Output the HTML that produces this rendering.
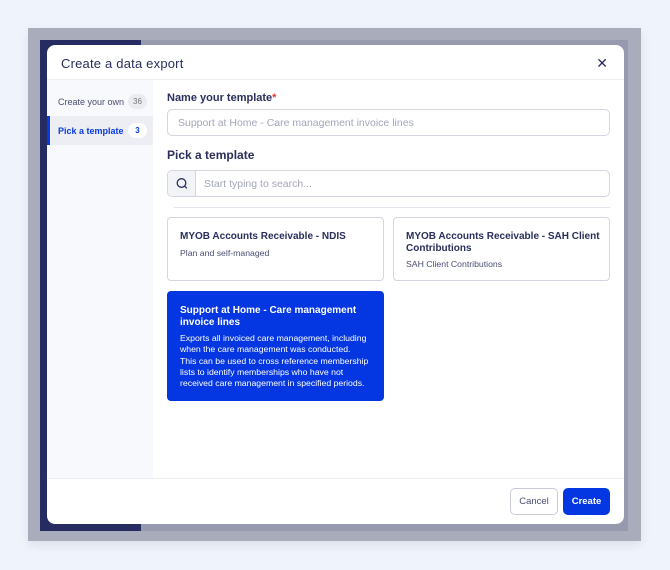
<!DOCTYPE html>
<html><head><meta charset="utf-8"><style>
*{box-sizing:border-box;margin:0;padding:0}
body{width:670px;height:570px;background:#eff3fb;font-family:"Liberation Sans",sans-serif;position:relative;overflow:hidden;color:#2a2e5c}
.frame{position:absolute;left:28px;top:28px;width:613px;height:513px;background:#a9acbb;box-shadow:0 4px 10px rgba(0,0,0,.08)}
.inner{position:absolute;left:40px;top:40px;width:588px;height:491px;background:#9799ae}
.nav{position:absolute;left:40px;top:40px;width:101px;height:491px;background:#262b62}
.modal{position:absolute;left:47px;top:45px;width:577px;height:479px;background:#fff;border-radius:8px;overflow:hidden}
.hdr{height:35px;border-bottom:1px solid #eceef4;padding:11px 0 0 14px;font-size:13px;color:#2a2e5c;letter-spacing:.2px}
.x{position:absolute;right:16px;top:10px;font-size:14px;color:#2a2e5c}
.side{position:absolute;left:0;top:35px;width:106px;height:398px;background:#f8f9fc}
.si{height:29px;display:flex;align-items:center;padding-left:11px;font-size:9px;color:#4a4e72;position:relative}
.badge{position:absolute;right:6px;top:7px;height:15px;min-width:19px;border-radius:8px;background:#ebecf1;font-size:8px;color:#777;text-align:center;line-height:15px}
.si.act{background:#eceef4;color:#0a3be0;font-weight:bold}
.si.act:before{content:"";position:absolute;left:0;top:0;bottom:0;width:3px;background:#0a3be0}
.si.act .badge{background:#fff;color:#0a3be0}
.lbl{position:absolute;left:120px;font-size:11px;font-weight:bold;color:#2a2e5c}
.inp{position:absolute;left:120px;width:443px;height:27px;border:1px solid #d3d5e0;border-radius:5px;font-size:10.5px;color:#a3a6b8;padding:7px 10px}
.card{position:absolute;border:1px solid #d3d5e0;border-radius:4px;padding:13px 12px;white-space:nowrap}
.card b{display:block;font-size:10px;line-height:11.5px;color:#2a2e5c}
.card span{display:block;font-size:8.7px;color:#4a4e72;margin-top:5px;line-height:11.3px}
.card.sel{background:#0436e2;border-color:#0436e2}
.card.sel b,.card.sel span{color:#fff}
.foot{position:absolute;left:0;top:433px;width:577px;height:1px;background:#eceef4}
.btn{position:absolute;top:443px;height:27px;border-radius:5px;font-size:9.5px;text-align:center;line-height:26px}
</style></head><body>
<div class="frame"></div><div class="inner"></div><div class="nav"></div>
<div class="modal">
<div class="hdr">Create a data export</div><div class="x">✕</div>
<div class="side">
<div class="si" style="margin-top:7px">Create your own<div class="badge">36</div></div>
<div class="si act">Pick a template<div class="badge">3</div></div>
</div>
<div class="lbl" style="top:47px">Name your template<span style="color:#e03a3a">*</span></div>
<div class="inp" style="top:64px">Support at Home - Care management invoice lines</div>
<div class="lbl" style="top:103px;font-size:12px">Pick a template</div>
<div class="inp" style="top:125px;padding-left:36px">Start typing to search...
<div style="position:absolute;left:0;top:0;width:28px;height:25px;background:#f3f4f8;border-right:1px solid #d3d5e0;border-radius:5px 0 0 5px">
<svg width="28" height="25" viewBox="0 0 28 25"><circle cx="13.5" cy="12" r="4.3" fill="none" stroke="#2a2e5c" stroke-width="1.3"/><path d="M16.6 15.1 L18.8 17.3" stroke="#2a2e5c" stroke-width="1.3"/></svg></div></div>
<div style="position:absolute;left:127px;top:162px;width:436px;height:1px;background:#e3e5ec"></div>
<div class="card" style="left:120px;top:172px;width:217px;height:64px"><b>MYOB Accounts Receivable - NDIS</b><span>Plan and self-managed</span></div>
<div class="card" style="left:346px;top:172px;width:217px;height:64px"><b>MYOB Accounts Receivable - SAH Client<br>Contributions</b><span>SAH Client Contributions</span></div>
<div class="card sel" style="left:120px;top:246px;width:217px;height:110px"><b>Support at Home - Care management<br>invoice lines</b><span>Exports all invoiced care management, including<br>when the care management was conducted.<br>This can be used to cross reference membership<br>lists to identify memberships who have not<br>received care management in specified periods.</span></div>
<div class="foot"></div>
<div class="btn" style="left:463px;width:48px;border:1px solid #c9cbd8;color:#4a4e72">Cancel</div>
<div class="btn" style="left:516px;width:47px;background:#0436e2;color:#fff;font-weight:bold;line-height:27px">Create</div>
</div>
</body></html>
